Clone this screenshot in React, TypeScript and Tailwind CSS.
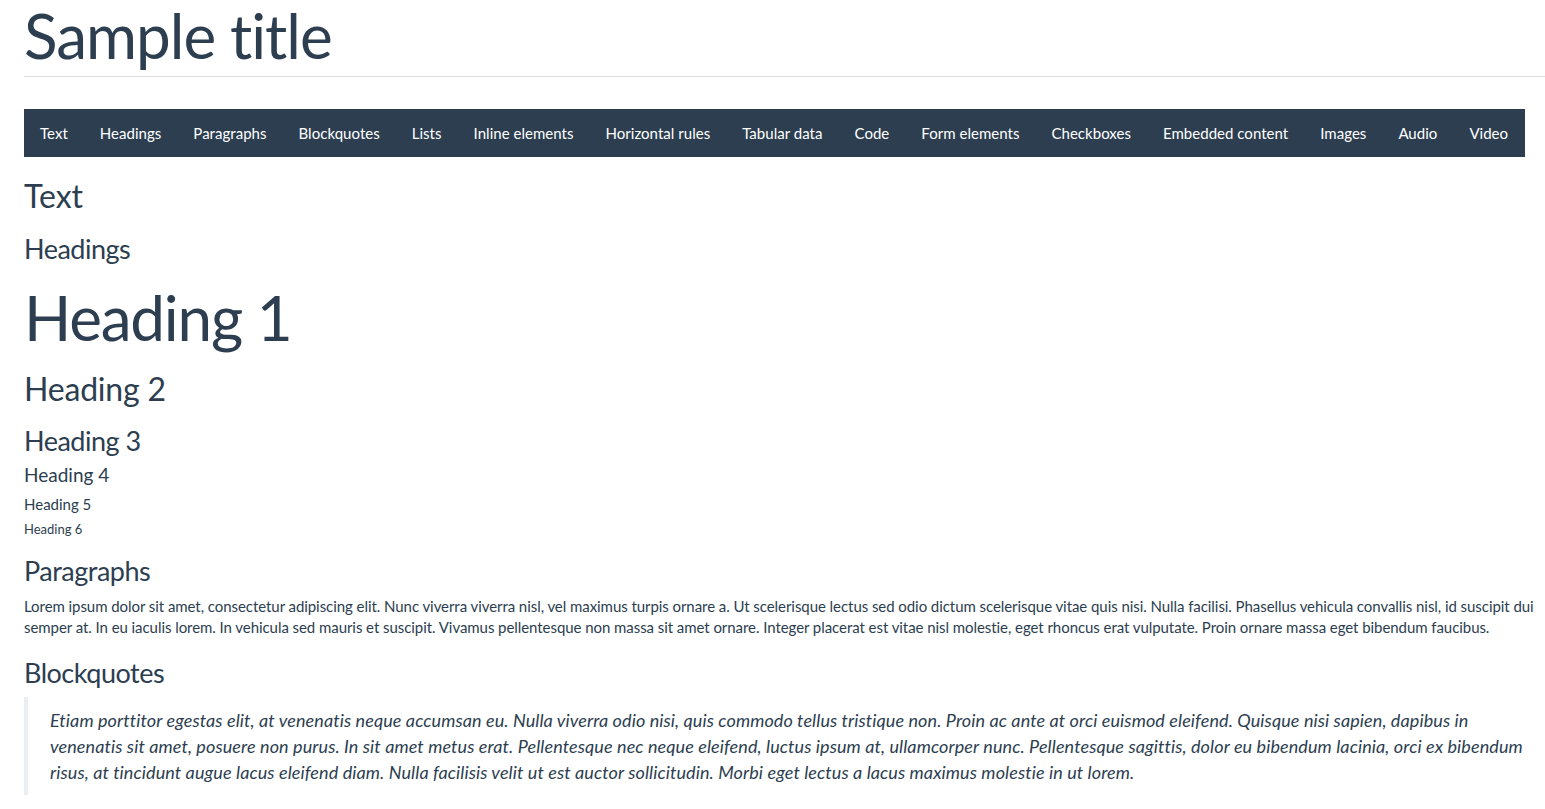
import React from 'react';

const navItems = [
  'Text',
  'Headings',
  'Paragraphs',
  'Blockquotes',
  'Lists',
  'Inline elements',
  'Horizontal rules',
  'Tabular data',
  'Code',
  'Form elements',
  'Checkboxes',
  'Embedded content',
  'Images',
  'Audio',
  'Video',
];

export default function App() {
  return (
    <div className="min-h-screen bg-white pl-6 text-[#2c3e50] font-['Lato',sans-serif] [font-variant-ligatures:none]">
      <header className="border-b border-[#dedcd8] pb-[6px]">
        <h1 className="text-[62px] leading-[70px] tracking-[-1px]">Sample title</h1>
      </header>

      <nav className="mt-8 mr-5 flex h-12 items-center bg-[#2c3e50]">
        {navItems.map((item) => (
          <a key={item} href="#" className="px-4 text-[15px] tracking-[0.03px] text-white">
            {item}
          </a>
        ))}
      </nav>

      <main>
        <h2 className="mt-5 text-[32px] leading-[38px]">Text</h2>

        <h3 className="mt-[17px] text-[27px] leading-[34px] tracking-[-0.5px]">Headings</h3>
        <div>
          <p className="mt-[13px] text-[62px] leading-[77px] tracking-[-1.2px]">Heading 1</p>
          <p className="mt-[14px] text-[32px] leading-[37px] tracking-[-0.2px]">Heading 2</p>
          <p className="mt-[17px] text-[27px] leading-[34px] tracking-[-0.5px]">Heading 3</p>
          <p className="mt-[5px] text-[19px] leading-[24px]">Heading 4</p>
          <p className="mt-[8px] text-[15px] leading-[19px]">Heading 5</p>
          <p className="mt-[7px] text-[13px] leading-[16px]">Heading 6</p>
        </div>

        <h3 className="mt-[17px] text-[27px] leading-[34px] tracking-[-0.5px]">Paragraphs</h3>
        <p className="mt-[8px] text-[15px] leading-[21px] tracking-[-0.06px]">
          Lorem ipsum dolor sit amet, consectetur adipiscing elit. Nunc viverra viverra nisl, vel maximus turpis ornare a. Ut scelerisque lectus sed odio dictum scelerisque vitae quis nisi. Nulla facilisi. Phasellus vehicula convallis nisl, id suscipit dui semper at. In eu iaculis lorem. In vehicula sed mauris et suscipit. Vivamus pellentesque non massa sit amet ornare. Integer placerat est vitae nisl molestie, eget rhoncus erat vulputate. Proin ornare massa eget bibendum faucibus.
        </p>

        <h3 className="mt-[18px] text-[27px] leading-[34px] tracking-[-0.5px]">Blockquotes</h3>
        <blockquote className="mt-[7px] border-l-4 border-[#eceff1] py-[10px] pl-[22px] pr-4 text-[18px] leading-[26px] tracking-[0.1px] italic">
          Etiam porttitor egestas elit, at venenatis neque accumsan eu. Nulla viverra odio nisi, quis commodo tellus tristique non. Proin ac ante at orci euismod eleifend. Quisque nisi sapien, dapibus in venenatis sit amet, posuere non purus. In sit amet metus erat. Pellentesque nec neque eleifend, luctus ipsum at, ullamcorper nunc. Pellentesque sagittis, dolor eu bibendum lacinia, orci ex bibendum risus, at tincidunt augue lacus eleifend diam. Nulla facilisis velit ut est auctor sollicitudin. Morbi eget lectus a lacus maximus molestie in ut lorem.
        </blockquote>
      </main>
    </div>
  );
}
